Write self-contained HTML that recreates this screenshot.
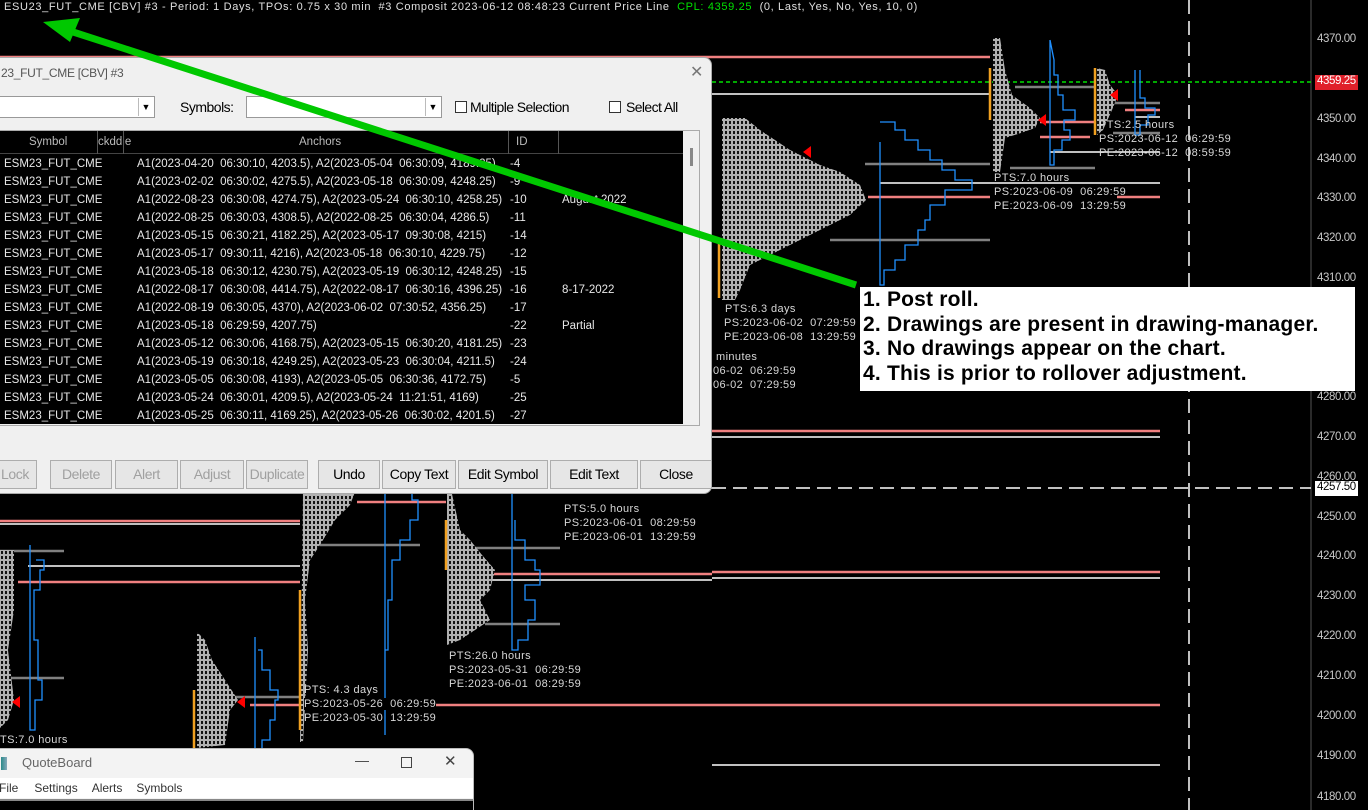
<!DOCTYPE html>
<html><head><meta charset="utf-8"><style>
*{margin:0;padding:0;box-sizing:border-box}
html{width:1368px;height:810px;overflow:hidden;background:#000}
body{width:1368px;height:810px;background:#000;position:relative;overflow:hidden;font-family:"Liberation Sans",sans-serif}
.abs{position:absolute}
.t{position:absolute;color:#d8d8d8;font-family:"Liberation Sans",sans-serif;font-size:11px;white-space:nowrap;letter-spacing:.4px}
.ax{position:absolute;left:1317px;color:#c8c8c8;font-family:"Liberation Sans",sans-serif;font-size:11.5px;letter-spacing:-.4px}
#dlg{left:-8px;top:57px;width:720px;height:437px;background:#f0f0f0;border:1px solid #aaa;border-radius:0 8px 8px 0}
.btn{position:absolute;top:402px;height:29px;background:#e6e6e6;border:1px solid #adadad;font-size:14px;text-align:center;line-height:27px;color:#000;letter-spacing:-.4px}
.dis{color:#a0a0a0}
.row{position:absolute;left:0;height:18px;width:690px;font-size:11.5px;color:#e8e8e8;line-height:18px}
.row span{position:absolute}
</style></head><body>
<svg class="abs" style="left:0;top:0" width="1368" height="810">
<defs>
<pattern id="tp" width="4" height="5" patternUnits="userSpaceOnUse"><rect width="4" height="5" fill="#111"/><rect x="0.5" y="0.5" width="3" height="4" fill="none" stroke="#b0b0b0" stroke-width="1"/></pattern>
</defs>
<line x1="1311" y1="0" x2="1311" y2="810" stroke="#555"/>
<line x1="1189" y1="0" x2="1189" y2="810" stroke="#fff" stroke-dasharray="14,7" stroke-width="1.5"/>
<line x1="712" y1="488" x2="1311" y2="488" stroke="#fff" stroke-dasharray="14,7" stroke-width="1.5"/>
<line x1="712" y1="82" x2="1311" y2="82" stroke="#00e000" stroke-dasharray="4,3" stroke-width="1.5"/>
<g stroke-width="2.5">
<line x1="0" y1="57" x2="990" y2="57" stroke="#f08080"/>
<line x1="1040" y1="137" x2="1090" y2="137" stroke="#f08080"/>
<line x1="1125" y1="110" x2="1160" y2="110" stroke="#f08080"/>
<line x1="868" y1="197" x2="990" y2="197" stroke="#f08080"/>
<line x1="1117" y1="197" x2="1160" y2="197" stroke="#f08080"/>
<line x1="712" y1="431" x2="1160" y2="431" stroke="#f08080"/>
<line x1="712" y1="572" x2="1160" y2="572" stroke="#f08080"/>
<line x1="712" y1="705" x2="1160" y2="705" stroke="#f08080"/>
<line x1="477" y1="574" x2="712" y2="574" stroke="#f08080"/>
<line x1="250" y1="705" x2="304" y2="705" stroke="#f08080"/>
<line x1="428" y1="705" x2="712" y2="705" stroke="#f08080"/>
<line x1="0" y1="521" x2="300" y2="521" stroke="#f08080"/>
<line x1="18" y1="582" x2="300" y2="582" stroke="#f08080"/>
<line x1="357" y1="502" x2="446" y2="502" stroke="#f08080"/>
<line x1="1040" y1="122" x2="1095" y2="122" stroke="#f08080"/>
</g>
<g stroke="#fff" stroke-width="1.5">
<line x1="712" y1="94" x2="990" y2="94"/>
<line x1="1135" y1="117" x2="1160" y2="117"/>
<line x1="1050" y1="152" x2="1160" y2="152"/>
<line x1="880" y1="183" x2="1160" y2="183"/>
<line x1="712" y1="437" x2="1160" y2="437"/>
<line x1="712" y1="578" x2="1160" y2="578"/>
<line x1="486" y1="580" x2="712" y2="580"/>
<line x1="712" y1="765" x2="1160" y2="765"/>
<line x1="0" y1="524" x2="300" y2="524"/>
<line x1="28" y1="566" x2="300" y2="566"/>
</g>
<g stroke="#808080" stroke-width="2.5">
<line x1="1015" y1="87" x2="1095" y2="87"/><line x1="1010" y1="168" x2="1095" y2="168"/>
<line x1="1113" y1="103" x2="1160" y2="103"/><line x1="1113" y1="133" x2="1160" y2="133"/>
<line x1="865" y1="164" x2="990" y2="164"/><line x1="830" y1="240" x2="990" y2="240"/>
<line x1="320" y1="545" x2="420" y2="545"/><line x1="473" y1="548" x2="560" y2="548"/>
<line x1="485" y1="624" x2="560" y2="624"/><line x1="224" y1="697" x2="300" y2="697"/>
<line x1="0" y1="551" x2="64" y2="551"/><line x1="4" y1="678" x2="64" y2="678"/>
</g>
<g fill="url(#tp)">
<polygon points="993,38 1000,38 1005,70 1012,95 1030,108 1040,118 1035,128 1018,134 1005,138 1000,172 993,172"/>
<polygon points="1097,68 1105,70 1110,85 1118,95 1112,110 1103,130 1097,135"/>
<polygon points="722,118 745,118 760,130 790,150 820,165 840,172 860,185 866,200 850,215 830,225 810,235 790,245 770,255 750,265 740,290 735,300 722,300"/>
<polygon points="303,492 355,492 350,505 335,520 320,545 310,560 305,600 308,650 303,742 300,742"/>
<polygon points="447,494 452,494 460,530 470,540 482,555 495,570 490,590 480,600 490,620 475,630 460,640 447,645"/>
<polygon points="197,632 205,640 212,660 225,680 238,700 230,710 225,745 197,748"/>
<polygon points="0,550 14,550 14,610 8,650 14,700 8,720 0,728"/>
</g>
<g stroke="#f0a020" stroke-width="2.5">
<line x1="990" y1="68" x2="990" y2="120"/><line x1="1095" y1="68" x2="1095" y2="135"/>
<line x1="719" y1="240" x2="719" y2="298"/><line x1="300" y1="590" x2="300" y2="730"/>
<line x1="446" y1="520" x2="446" y2="570"/><line x1="194" y1="690" x2="194" y2="748"/>
</g>
<g fill="none" stroke="#2090ff" stroke-width="1.3">
<polyline points="1050,40 1050,165 1054,165 1054,150 1062,150 1062,140 1070,140 1070,130 1064,130 1064,120 1075,120 1075,110 1063,110 1063,95 1058,95 1058,75 1054,75 1054,60 1050,40"/>
<polyline points="1135,70 1135,135 1140,135 1140,125 1148,125 1148,115 1155,115 1155,108 1145,108 1145,98 1140,98 1140,70"/>
<polyline points="880,142 880,285 884,285 884,270 895,270 895,260 905,260 905,245 918,245 918,230 925,230 925,220 930,220 930,205 945,205 945,190 972,190 972,180 955,180 955,170 942,170 942,160 930,160 930,150 918,150 918,140 905,140 905,130 895,130 895,122 880,122"/>
<polyline points="385,490 385,735 385,650 388,650 388,600 392,600 392,560 400,560 400,540 410,540 410,520 418,520 418,500 412,500 412,490"/>
<polyline points="512,490 512,650 518,650 518,640 528,640 528,620 535,620 535,600 525,600 525,585 540,585 540,570 535,570 535,560 525,560 525,540 515,540 515,520"/>
<polyline points="255,637 255,750 262,750 262,740 270,740 270,720 275,720 275,700 278,700 278,690 270,690 270,670 262,670 262,650 258,650"/>
<polyline points="30,545 30,730 35,730 35,700 42,700 42,680 38,680 38,640 34,640 34,590 40,590 40,570 44,570 44,560 36,560"/>
</g>
<g fill="#f00">
<polygon points="1118,89 1118,101 1110,95"/><polygon points="1046,114 1046,126 1038,120"/>
<polygon points="811,146 811,158 803,152"/><polygon points="245,696 245,708 237,702"/><polygon points="20,696 20,708 12,702"/>
</g>
<rect x="1315" y="75" width="43" height="15" fill="#e0202a"/>
<rect x="1315" y="481" width="43" height="15" fill="#fff"/>
</svg>
<div class="t" style="left:4px;top:1px;font-size:11px;letter-spacing:.65px;color:#e0e0e0">ESU23_FUT_CME [CBV] #3 - Period: 1 Days, TPOs: 0.75 x 30 min &nbsp;#3 Composit 2023-06-12 08:48:23 Current Price Line &nbsp;<span style="color:#00e000">CPL: 4359.25</span> &nbsp;(0, Last, Yes, No, Yes, 10, 0)</div>
<div class="ax" style="top:33px">4370.00</div><div class="ax" style="top:113px">4350.00</div><div class="ax" style="top:153px">4340.00</div><div class="ax" style="top:192px">4330.00</div><div class="ax" style="top:232px">4320.00</div><div class="ax" style="top:272px">4310.00</div><div class="ax" style="top:391px">4280.00</div><div class="ax" style="top:431px">4270.00</div><div class="ax" style="top:471px">4260.00</div><div class="ax" style="top:511px">4250.00</div><div class="ax" style="top:550px">4240.00</div><div class="ax" style="top:590px">4230.00</div><div class="ax" style="top:630px">4220.00</div><div class="ax" style="top:670px">4210.00</div><div class="ax" style="top:710px">4200.00</div><div class="ax" style="top:750px">4190.00</div><div class="ax" style="top:791px">4180.00</div>
<div class="ax" style="top:75px;color:#fff">4359.25</div>
<div class="ax" style="top:481px;color:#000">4257.50</div>
<div class="t" style="left:1099px;top:119px">PTS:2.5 hours</div><div class="t" style="left:1099px;top:133px">PS:2023-06-12 &nbsp;06:29:59</div><div class="t" style="left:1099px;top:147px">PE:2023-06-12 &nbsp;08:59:59</div>
<div class="t" style="left:994px;top:172px">PTS:7.0 hours</div><div class="t" style="left:994px;top:186px">PS:2023-06-09 &nbsp;06:29:59</div><div class="t" style="left:994px;top:200px">PE:2023-06-09 &nbsp;13:29:59</div>
<div class="t" style="left:725px;top:303px">PTS:6.3 days</div><div class="t" style="left:724px;top:317px">PS:2023-06-02 &nbsp;07:29:59</div><div class="t" style="left:724px;top:331px">PE:2023-06-08 &nbsp;13:29:59</div>
<div class="t" style="left:716px;top:351px">minutes</div><div class="t" style="left:713px;top:365px">06-02 &nbsp;06:29:59</div><div class="t" style="left:713px;top:379px">06-02 &nbsp;07:29:59</div>
<div class="t" style="left:564px;top:503px">PTS:5.0 hours</div><div class="t" style="left:564px;top:517px">PS:2023-06-01 &nbsp;08:29:59</div><div class="t" style="left:564px;top:531px">PE:2023-06-01 &nbsp;13:29:59</div>
<div class="t" style="left:449px;top:650px">PTS:26.0 hours</div><div class="t" style="left:449px;top:664px">PS:2023-05-31 &nbsp;06:29:59</div><div class="t" style="left:449px;top:678px">PE:2023-06-01 &nbsp;08:29:59</div>
<div class="t" style="left:304px;top:684px">PTS: 4.3 days</div><div class="t" style="left:304px;top:698px;background:#000">PS:2023-05-26 &nbsp;06:29:59</div><div class="t" style="left:304px;top:712px">PE:2023-05-30 &nbsp;13:29:59</div>
<div class="t" style="left:0;top:734px">TS:7.0 hours</div>
<div class="abs" style="left:860px;top:287px;width:495px;height:104px;background:#fff;color:#000;font-weight:bold;font-size:21px;letter-spacing:.2px;line-height:24.5px;padding:1px 0 0 3px;white-space:nowrap">1. Post roll.<br>2. Drawings are present in drawing-manager.<br>3. No drawings appear on the chart.<br>4. This is prior to rollover adjustment.</div>
<div id="dlg" class="abs">
<div class="abs" style="left:8px;top:8px;font-size:12px;color:#555;letter-spacing:-.3px">23_FUT_CME [CBV] #3</div>
<div class="abs" style="left:697px;top:4px;font-size:16px;color:#777">✕</div>
<div class="abs" style="left:0;top:38px;width:162px;height:22px;background:#fff;border:1px solid #999"><div class="abs" style="right:1px;top:1px;width:15px;height:18px;border-left:1px solid #bbb;font-size:9px;text-align:center;line-height:18px">▼</div></div>
<div class="abs" style="left:187px;top:41px;font-size:14px;letter-spacing:-.5px">Symbols:</div>
<div class="abs" style="left:253px;top:38px;width:196px;height:22px;background:#fff;border:1px solid #999"><div class="abs" style="right:1px;top:1px;width:15px;height:18px;border-left:1px solid #bbb;font-size:9px;text-align:center;line-height:18px">▼</div></div>
<div class="abs" style="left:462px;top:43px;width:12px;height:12px;background:#fff;border:1px solid #333"></div>
<div class="abs" style="left:477px;top:41px;font-size:14px;letter-spacing:-.6px">Multiple Selection</div>
<div class="abs" style="left:616px;top:43px;width:12px;height:12px;background:#fff;border:1px solid #333"></div>
<div class="abs" style="left:633px;top:41px;font-size:14px;letter-spacing:-.6px">Select All</div>
<div class="abs" style="left:0;top:72px;width:707px;height:296px;border:1px solid #aaa;background:#f0f0f0"></div>
<div class="abs" style="left:0;top:73px;width:690px;height:293px;background:#000;overflow:hidden">
<div class="row" style="top:0;height:23px;color:#bbb;border-bottom:1px solid #444;line-height:23px"><span style="left:36px">Symbol</span><span style="left:105px">ckddle</span><span style="left:306px">Anchors</span><span style="left:523px">ID</span>
<span style="left:104px;top:0;height:23px;border-left:1px solid #555"></span><span style="left:565px;height:23px;border-left:1px solid #555"></span><span style="left:515px;height:23px;border-left:1px solid #555"></span><span style="left:130px;height:23px;border-left:1px solid #555"></span></div>
</div>
<div class="abs" style="left:0;top:97px;width:690px;height:269px;overflow:hidden">
<div class="row" style="top:0"><span style="left:11px">ESM23_FUT_CME</span><span style="left:144px">A1(2023-04-20 &nbsp;06:30:10, 4203.5), A2(2023-05-04 &nbsp;06:30:09, 4189.25)</span><span style="left:517px">-4</span></div>
<div class="row" style="top:18px"><span style="left:11px">ESM23_FUT_CME</span><span style="left:144px">A1(2023-02-02 &nbsp;06:30:02, 4275.5), A2(2023-05-18 &nbsp;06:30:09, 4248.25)</span><span style="left:517px">-9</span></div>
<div class="row" style="top:36px"><span style="left:11px">ESM23_FUT_CME</span><span style="left:144px">A1(2022-08-23 &nbsp;06:30:08, 4274.75), A2(2023-05-24 &nbsp;06:30:10, 4258.25)</span><span style="left:517px">-10</span><span style="left:569px">August 2022</span></div>
<div class="row" style="top:54px"><span style="left:11px">ESM23_FUT_CME</span><span style="left:144px">A1(2022-08-25 &nbsp;06:30:03, 4308.5), A2(2022-08-25 &nbsp;06:30:04, 4286.5)</span><span style="left:517px">-11</span></div>
<div class="row" style="top:72px"><span style="left:11px">ESM23_FUT_CME</span><span style="left:144px">A1(2023-05-15 &nbsp;06:30:21, 4182.25), A2(2023-05-17 &nbsp;09:30:08, 4215)</span><span style="left:517px">-14</span></div>
<div class="row" style="top:90px"><span style="left:11px">ESM23_FUT_CME</span><span style="left:144px">A1(2023-05-17 &nbsp;09:30:11, 4216), A2(2023-05-18 &nbsp;06:30:10, 4229.75)</span><span style="left:517px">-12</span></div>
<div class="row" style="top:108px"><span style="left:11px">ESM23_FUT_CME</span><span style="left:144px">A1(2023-05-18 &nbsp;06:30:12, 4230.75), A2(2023-05-19 &nbsp;06:30:12, 4248.25)</span><span style="left:517px">-15</span></div>
<div class="row" style="top:126px"><span style="left:11px">ESM23_FUT_CME</span><span style="left:144px">A1(2022-08-17 &nbsp;06:30:08, 4414.75), A2(2022-08-17 &nbsp;06:30:16, 4396.25)</span><span style="left:517px">-16</span><span style="left:569px">8-17-2022</span></div>
<div class="row" style="top:144px"><span style="left:11px">ESM23_FUT_CME</span><span style="left:144px">A1(2022-08-19 &nbsp;06:30:05, 4370), A2(2023-06-02 &nbsp;07:30:52, 4356.25)</span><span style="left:517px">-17</span></div>
<div class="row" style="top:162px"><span style="left:11px">ESM23_FUT_CME</span><span style="left:144px">A1(2023-05-18 &nbsp;06:29:59, 4207.75)</span><span style="left:517px">-22</span><span style="left:569px">Partial</span></div>
<div class="row" style="top:180px"><span style="left:11px">ESM23_FUT_CME</span><span style="left:144px">A1(2023-05-12 &nbsp;06:30:06, 4168.75), A2(2023-05-15 &nbsp;06:30:20, 4181.25)</span><span style="left:517px">-23</span></div>
<div class="row" style="top:198px"><span style="left:11px">ESM23_FUT_CME</span><span style="left:144px">A1(2023-05-19 &nbsp;06:30:18, 4249.25), A2(2023-05-23 &nbsp;06:30:04, 4211.5)</span><span style="left:517px">-24</span></div>
<div class="row" style="top:216px"><span style="left:11px">ESM23_FUT_CME</span><span style="left:144px">A1(2023-05-05 &nbsp;06:30:08, 4193), A2(2023-05-05 &nbsp;06:30:36, 4172.75)</span><span style="left:517px">-5</span></div>
<div class="row" style="top:234px"><span style="left:11px">ESM23_FUT_CME</span><span style="left:144px">A1(2023-05-24 &nbsp;06:30:01, 4209.5), A2(2023-05-24 &nbsp;11:21:51, 4169)</span><span style="left:517px">-25</span></div>
<div class="row" style="top:252px"><span style="left:11px">ESM23_FUT_CME</span><span style="left:144px">A1(2023-05-25 &nbsp;06:30:11, 4169.25), A2(2023-05-26 &nbsp;06:30:02, 4201.5)</span><span style="left:517px">-27</span></div>
</div>
<div class="abs" style="left:697px;top:90px;width:3px;height:18px;background:#888"></div>
<div class="btn dis" style="left:0;width:44px">Lock</div>
<div class="btn dis" style="left:57px;width:62px">Delete</div>
<div class="btn dis" style="left:122px;width:63px">Alert</div>
<div class="btn dis" style="left:187px;width:64px">Adjust</div>
<div class="btn dis" style="left:253px;width:62px">Duplicate</div>
<div class="btn" style="left:325px;width:62px">Undo</div>
<div class="btn" style="left:389px;width:74px">Copy Text</div>
<div class="btn" style="left:465px;width:90px">Edit Symbol</div>
<div class="btn" style="left:557px;width:88px">Edit Text</div>
<div class="btn" style="left:647px;width:72px">Close</div>
</div>
<div class="abs" style="left:-8px;top:748px;width:482px;height:62px;background:#f3f3f3;border:1px solid #bbb;border-bottom:none;border-radius:0 8px 0 0;overflow:hidden">
<div class="abs" style="left:8px;top:8px;width:6px;height:13px;background:linear-gradient(90deg,#2a8a8a,#8ab)"></div>
<div class="abs" style="left:29px;top:6px;font-size:13px;color:#666">QuoteBoard</div>
<div class="abs" style="left:362px;top:3px;font-size:14px;color:#444">—</div>
<div class="abs" style="left:408px;top:8px;width:11px;height:11px;border:1px solid #444"></div>
<div class="abs" style="left:451px;top:3px;font-size:15px;color:#444">✕</div>
<div class="abs" style="left:0;top:29px;width:482px;height:20px;background:#fff;font-size:12px;color:#333;line-height:20px"><span style="margin-left:6px">File</span><span style="margin-left:16px">Settings</span><span style="margin-left:14px">Alerts</span><span style="margin-left:14px">Symbols</span></div>
<div class="abs" style="left:0;top:50px;width:482px;height:12px;background:#000;border-top:2px solid #888"></div>
</div>
<svg class="abs" style="left:0;top:0" width="1368" height="810">
<line x1="70" y1="31" x2="856" y2="285" stroke="#00c800" stroke-width="7"/>
<polygon points="43,22 80,18 70,42" fill="#00c800"/>
</svg>
</body></html>
